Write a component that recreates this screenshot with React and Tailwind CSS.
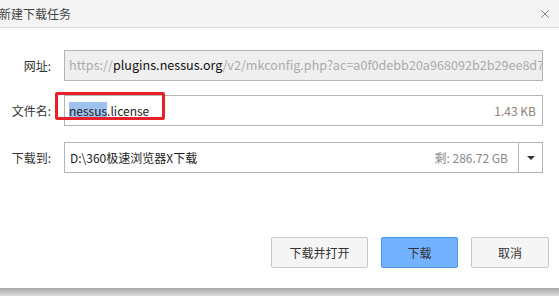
import { X } from 'lucide-react';

const font = { fontFamily: '"Noto Sans CJK SC", "Noto Sans", sans-serif' };

const Label = ({ children }) => (
    <div className="w-[52px] shrink-0 text-right text-[12px] text-[#333] pr-[1px]">{children}</div>
);

const App = () => {
    return (
        <div className="w-[559px] h-[296px] flex flex-col bg-white overflow-hidden" style={font}>
            {/* title bar */}
            <div className="h-[28px] shrink-0 flex items-center justify-between bg-[#f4f4f4] border-b border-[#dcdcdc]">
                <span className="text-[12px] text-[#444] -ml-[1px]">新建下载任务</span>
                <X className="w-[14px] h-[14px] text-[#555] mr-[7px]" strokeWidth={1.2} />
            </div>

            <div className="flex flex-col pr-[16px]">
                {/* url */}
                <div className="flex items-center mt-[22px]">
                    <Label>网址:</Label>
                    <div className="ml-[12px] flex-1 h-[31px] border border-[#b4b4b4] bg-[#efefef] flex items-center pl-[4px] overflow-hidden whitespace-nowrap text-[12.6px] text-[#ababab]">
                        https://<span className="text-[#111]">plugins.nessus.org</span>/v2/mkconfig.php?ac=a0f0debb20a968092b2b29ee8d7f1c
                    </div>
                </div>

                {/* file name */}
                <div className="flex items-center mt-[14px]">
                    <Label>文件名:</Label>
                    <div className="relative ml-[12px] flex-1 h-[31px] border border-[#b4b4b4] flex items-center justify-between pl-[4px] pr-[6px] text-[12px]">
                        <span className="text-[#222]">
                            <span className="bg-[#9ec2f0]">nessus</span>.license
                        </span>
                        <span className="text-[#8f7f78]">1.43 KB</span>
                        <div className="absolute -left-[10px] -top-[4px] w-[110px] h-[28px] border-[3px] border-[#e8202a] rounded-[2px]" />
                    </div>
                </div>

                {/* save to */}
                <div className="flex items-center mt-[16px]">
                    <Label>下载到:</Label>
                    <div className="ml-[12px] flex-1 h-[31px] border border-[#b4b4b4] flex items-stretch text-[12px]">
                        <div className="flex-1 flex items-center justify-between pl-[5px] pr-[10px]">
                            <span className="text-[#222]">D:\360极速浏览器X下载</span>
                            <span className="text-[#8a8a8a]">剩: 286.72 GB</span>
                        </div>
                        <div className="w-[24px] border-l border-[#b4b4b4] flex items-center justify-center">
                            <div className="w-0 h-0 border-l-[4px] border-r-[4px] border-t-[4px] border-l-transparent border-r-transparent border-t-[#333]" />
                        </div>
                    </div>
                </div>
            </div>

            {/* buttons */}
            <div className="flex justify-end gap-[12px] pr-[10px] mt-[64px] text-[12px] text-[#333]">
                <button className="w-[97px] h-[31px] bg-[#f5f5f5] border border-[#c8c8c8] rounded-[2px]">下载并打开</button>
                <button className="w-[77px] h-[31px] bg-[#72b2ff] border border-[#4d94e8] rounded-[2px] ml-[1px]">下载</button>
                <button className="w-[78px] h-[31px] bg-[#f5f5f5] border border-[#c8c8c8] rounded-[2px] ml-[1px]">取消</button>
            </div>

            <div className="mt-auto h-[8px] bg-gradient-to-b from-[#a8a8a8] to-[#dcdcdc]" />
        </div>
    );
};

export default App;
